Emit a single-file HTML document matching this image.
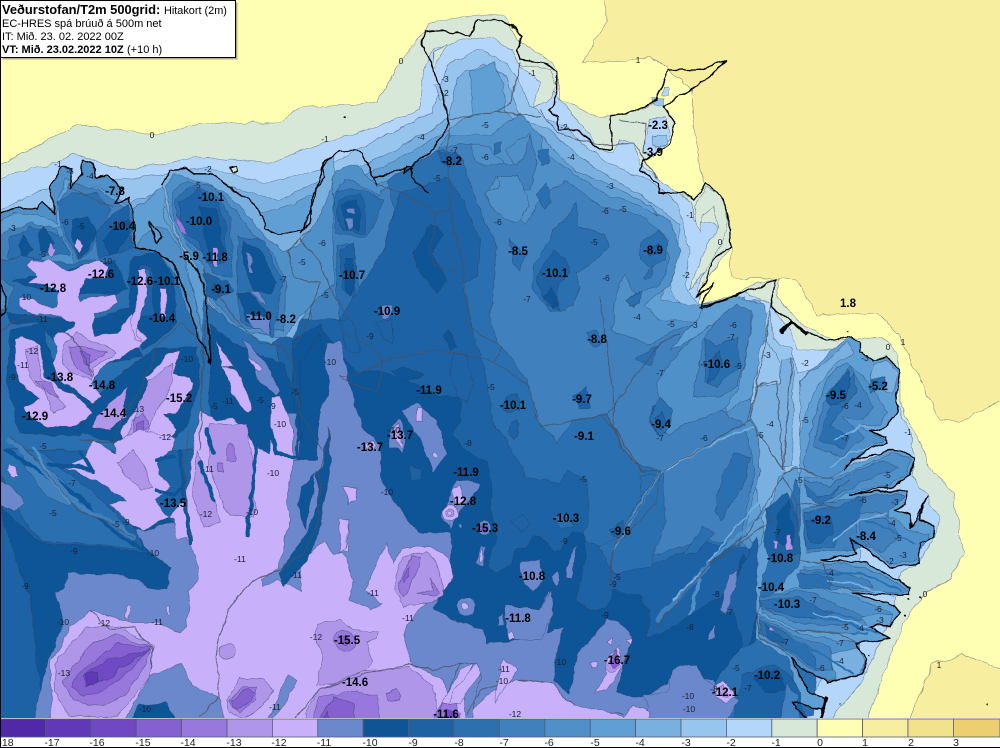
<!DOCTYPE html>
<html><head><meta charset="utf-8"><style>
html,body{margin:0;padding:0;background:#fff}
body{width:1000px;height:748px;overflow:hidden;position:relative;font-family:"Liberation Sans",sans-serif}
svg{position:absolute;left:0;top:0}
polygon,circle{stroke:#2a3a5a;stroke-opacity:.55;stroke-width:.6;vector-effect:non-scaling-stroke}
.c0{fill:#f8eea0}.c1{fill:#d8e8d8}.c2{fill:#b4d6fb}.c3{fill:#98c5ee}.c4{fill:#79b0e0}.c5{fill:#609fd4}.c6{fill:#5090c8}.c7{fill:#3f80bd}.c8{fill:#2c70b0}.c9{fill:#1f62a4}.c10{fill:#0f5596}.c11{fill:#6c88cc}.c12{fill:#c8b0fa}.c13{fill:#b096e8}.c14{fill:#9878dc}.c15{fill:#8460d0}.c16{fill:#7048c4}.c17{fill:#6038b8}.c18{fill:#5028a8}
.l{fill:none;vector-effect:non-scaling-stroke;stroke-linejoin:round;stroke-linecap:round}
.coast{stroke:#000;stroke-width:1.3}
.road{stroke:#4a5060;stroke-width:1;stroke-opacity:.85}
.f10{stroke:#0f5596;stroke-width:4}.f9{stroke:#1f62a4;stroke-width:7}.f8{stroke:#2c70b0;stroke-width:9}.f7{stroke:#3f80bd;stroke-width:5}.f6{stroke:#5090c8;stroke-width:3}.f4{stroke:#79b0e0;stroke-width:1.5}
text{font-family:"Liberation Sans",sans-serif}
.b text{font-size:11.5px;font-weight:bold;fill:#000;text-anchor:middle}
.s text{font-size:8.5px;fill:#1a2030;text-anchor:middle}
</style></head><body>
<svg width="1000" height="748" viewBox="0 0 1000 748">
<defs><filter id="w" filterUnits="userSpaceOnUse" x="-20" y="-20" width="1040" height="780"><feTurbulence type="fractalNoise" baseFrequency=".07" numOctaves="3" seed="4" result="n"/><feDisplacementMap in="SourceGraphic" in2="n" scale="6" xChannelSelector="R" yChannelSelector="G"/></filter></defs>
<rect width="1000" height="748" fill="#fff"/>
<rect x="0" y="0" width="1000" height="720" fill="#ffffb4"/>
<g filter="url(#w)">
<rect x="-20" y="-20" width="1040" height="745" fill="#ffffb4"/>
<polygon class="c0" points="600,-20 608,20 582,63 638,60 650,55 692,90 693,120 700,170 731,247 731,277 740,278 797,280 817,315 877,313 900,337 920,380 940,420 960,422 1020,390 1020,-20"/>
<polygon class="c0" points="907,725 933,663 963,655 1020,675 1020,725"/>
<polygon class="c1" points="-20,175 43,143 77,125 157,135 200,123 280,123 300,107 377,103 400,63 430,23 477,15 505,15 518,40 540,53 557,70 560,100 600,117 635,112 660,100 675,123 670,143 645,160 660,183 693,200 707,183 720,197 730,220 730,247 717,267 703,283 697,310 740,293 757,283 780,280 777,297 800,323 833,340 863,338 883,337 897,353 900,373 900,407 917,437 933,473 953,493 963,553 950,580 925,593 910,613 893,647 865,725 -20,725"/>
<polygon class="c2" points="-20,188 17,172 57,163 73,153 120,170 200,157 273,163 300,150 377,127 420,110 423,70 433,50 460,40 490,37 513,50 517,63 547,80 557,97 583,127 600,150 613,152 620,140 633,143 640,163 660,180 690,202 695,220 713,223 723,233 717,247 707,267 698,287 700,305 743,293 770,303 790,330 797,350 833,350 870,360 900,373 893,397 910,433 915,457 912,477 928,497 940,520 933,540 920,563 900,573 893,613 877,647 863,680 840,707 830,725 -20,725"/>
<polygon class="c3" points="-20,220 20,200 60,183 120,180 180,172 207,168 267,183 320,170 367,145 433,112 440,85 448,65 477,50 507,63 517,80 530,105 545,118 565,125 590,150 620,170 650,180 680,205 685,235 690,255 685,285 700,305 745,298 755,322 770,310 773,340 792,350 797,373 813,370 832,355 860,400 860,600 800,725 -20,725"/>
<polygon class="c4" points="-20,245 30,212 130,203 165,190 200,180 280,200 320,180 380,158 440,125 448,118 458,77 483,62 507,77 513,97 520,118 545,128 590,165 640,195 680,225 676,260 670,290 690,315 720,300 760,300 767,340 750,397 747,417 770,400 780,387 785,470 790,725 -20,725"/>
<polygon class="c5" points="135,225 168,205 200,215 280,210 320,190 380,168 445,132 470,115 473,115 470,70 493,62 503,83 505,110 520,125 540,135 575,170 620,190 650,205 672,235 668,270 660,300 690,305 730,303 762,303 762,340 748,400 745,425 770,570 790,725 100,725 100,400"/>
<polygon class="c6" points="447,135 490,135 520,113 540,135 545,155 570,170 605,195 640,205 670,222 680,250 670,285 645,305 660,320 700,320 725,305 755,305 758,340 745,385 757,425 760,470 745,530 770,570 790,725 300,725 300,400 305,260 315,200 335,170 358,165 375,185 410,172 435,155"/>
<polygon class="c7" points="440,147 470,143 490,150 503,163 518,165 530,135 538,160 530,190 525,190 495,178 490,190 515,215 525,225 540,200 565,180 600,205 640,215 665,235 670,260 660,285 635,295 625,275 618,285 612,330 650,345 675,330 705,320 735,320 745,340 735,385 720,410 745,425 755,470 740,540 765,570 770,650 790,725 300,725 300,420 312,300 320,250 330,200 345,180 362,185 378,195 395,180 425,165"/>
<g transform="translate(300,20) scale(.3333)">
<polygon class="c6" points="510,370 565,380 610,430 560,435 525,420"/>
<polygon class="c6" points="620,390 660,360 690,340 670,420 640,430"/>
<polygon class="c8" points="580,370 605,365 605,395 585,400"/>
<polygon class="c6" points="555,520 600,500 590,470 650,465 670,500 690,560 650,610 610,590 570,560"/>
<polygon class="c8" points="715,390 745,385 745,430 725,440"/>
<polygon class="c8" points="710,520 740,490 755,550 735,570"/>
<polygon class="c8" points="1020,670 1075,630 1105,660 1095,720 1050,740 1020,720"/>
<polygon class="c9" points="1045,690 1075,670 1085,700 1050,710"/>
<polygon class="c8" points="980,840 1015,815 1020,840 1000,860"/>
<polygon class="c8" points="1035,770 1060,735 1055,770 1040,780"/>
<polygon class="c8" points="700,740 750,660 760,630 800,590 830,550 835,620 910,640 925,680 880,730 830,760 840,800 820,860 750,880 700,810"/>
<polygon class="c9" points="710,770 760,690 800,720 810,760 780,790 770,830 780,870 740,860 720,810"/>
<polygon class="c10" points="730,830 750,800 775,850 760,870"/>
<polygon class="c8" points="630,660 660,690 680,700 660,750 640,730"/>
</g>
<polygon class="c8" points="387,180 443,148 457,152 470,183 483,217 497,247 490,320 497,343 507,353 527,380 537,420 557,443 573,420 593,417 607,413 617,437 633,463 660,470 650,500 620,540 640,560 700,540 740,545 745,640 770,700 790,725 300,725 300,330 310,330 320,340 335,340 340,320 335,290 337,245 353,245 360,290 372,300 375,290 385,245 395,210"/>
<polygon class="c9" points="400,193 433,183 447,177 463,200 480,240 477,277 463,283 470,320 487,380 493,420 513,453 527,477 560,483 567,470 587,480 590,520 580,540 607,547 613,553 643,567 680,553 703,543 753,550 757,633 770,690 790,725 200,725 200,420 285,330 300,320 340,320 357,290 383,253"/>
<g transform="translate(300,20) scale(.3333)">
<polygon class="c8" points="115,510 190,510 250,540 220,620 190,650 110,640 100,540"/>
<polygon class="c9" points="115,540 180,520 200,560 190,640 130,630 110,590"/>
<polygon class="c10" points="125,550 170,540 185,570 175,630 135,625"/>
<polygon class="c11" points="140,565 165,565 165,582 145,582"/>
<polygon class="c11" points="135,600 155,598 160,625 145,630"/>
<polygon class="c9" points="415,390 470,400 480,425 450,445 420,430"/>
<polygon class="c10" points="390,610 430,640 400,700 440,780 410,820 350,740 340,700 370,650"/>
<polygon class="c9" points="120,690 160,670 170,730 160,830 125,800"/>
<polygon class="c10" points="135,715 160,715 165,790 150,825 135,790"/>
<polygon class="c11" points="240,860 280,860 270,895 250,895"/>
</g>
<polygon class="c9" points="-20,440 200,440 200,725 -20,725"/>
<polygon class="c10" points="293,340 320,325 340,353 357,373 377,370 397,377 413,383 440,397 457,397 463,403 460,420 453,433 463,447 487,463 493,487 490,507 497,537 487,567 497,573 510,563 517,550 527,547 533,537 540,537 553,550 560,550 573,533 583,533 587,553 580,577 577,600 590,610 607,607 613,590 640,597 650,610 647,637 665,632 693,613 730,590 743,555 755,570 757,640 775,680 790,725 45,725 30,600 0,510 20,450 200,450 290,430"/>
<g transform="translate(340,320) scale(.3333)">
<polygon class="c9" points="105,0 160,0 160,70 130,60"/><polygon class="c10" points="310,40 330,30 350,80 330,90"/>
<polygon class="c9" points="340,100 380,110 400,190 380,245 350,230 330,160"/>
<polygon class="c10" points="155,150 190,140 250,165 190,185"/><polygon class="c9" points="0,0 40,0 60,100 20,90"/>
<polygon class="c9" points="510,220 530,215 540,270 500,280 485,260"/>
<polygon class="c9" points="510,310 530,300 540,340 520,360 500,340"/>
<polygon class="c9" points="700,230 740,200 750,260 720,265"/>
<polygon class="c9" points="940,260 975,235 995,280 985,340 950,345 930,310"/>
<polygon class="c10" points="955,280 975,270 985,320 955,325"/>
<polygon class="c9" points="830,610 850,600 860,640 840,650"/>
<polygon class="c8" points="740,40 770,35 790,70 760,80"/>
<polygon class="c9" points="510,600 550,585 570,610 545,640"/>
<polygon class="c8" points="640,590 680,580 700,620 660,625"/>
<polygon class="c8" points="903,470 960,465 950,565 920,570 905,530"/>
</g>
<polygon class="c11" points="147,530 240,500 310,430 327,343 340,340 350,387 362,427 380,447 383,483 407,520 420,533 450,533 453,547 448,563 447,587 433,607 453,620 483,630 487,643 520,640 540,610 548,590 553,610 547,633 563,627 557,653 553,680 570,693 577,653 607,620 617,620 633,637 627,653 617,693 640,697 667,683 673,673 680,680 700,680 713,680 740,700 750,725 33,725 45,670 63,622 55,593 65,587 67,572 97,575 120,575 140,580 147,587 168,590 170,567 150,553 143,543 133,530"/>
<!-- below W block early -->
<g transform="translate(0,430) scale(.3333)">
<polygon class="c9" points="-30,0 600,0 570,150 590,300 470,260 400,290 440,370 320,350 130,340 90,310 0,230 -30,220"/>
<polygon class="c8" points="-30,30 30,0 170,100 340,240 420,360 320,345 130,335 90,300 0,130"/>
<polygon class="c7" points="60,50 150,120 250,210 200,230 130,190 80,120"/>
</g>
<!-- West block base -->
<g transform="translate(0,150) scale(.3333)">
<polygon class="c5" points="400,180 500,100 490,200 550,300 630,640 405,290"/>
<polygon class="c6" points="405,290 430,260 470,230 500,240 540,290 580,430 620,620 560,520 500,340"/>
<polygon class="c5" points="450,215 470,240 485,265 470,280 460,260"/>
<polygon class="c6" points="-30,200 60,170 110,180 125,155 165,195 150,110 185,50 215,60 210,115 245,75 250,30 280,40 290,85 320,75 365,115 345,165 385,145 400,180 405,290 480,310 520,340 545,400 570,480 600,570 625,640 620,900 -30,900"/>
<polygon class="c5" points="-30,230 40,190 110,195 170,220 170,160 195,80 215,95 240,120 290,110 340,130 395,180 380,200 300,190 200,220 100,260 -30,300"/>
<polygon class="c7" points="-30,290 30,240 100,220 170,240 200,300 140,300 50,330 -30,320"/>
<polygon class="c7" points="180,150 205,100 300,120 370,170 395,180 400,280 280,340 230,350 180,220"/>
<polygon class="c8" points="205,130 290,130 330,180 310,230 270,300 240,330 215,290 190,230 170,160"/>
<polygon class="c10" points="215,210 260,200 290,240 260,300 240,325 220,290"/>
<polygon class="c12" points="220,285 235,265 248,285 235,305"/>
<polygon class="c9" points="285,250 340,190 385,160 400,290 350,350 300,340"/>
<polygon class="c10" points="310,270 350,220 385,210 390,260 330,320"/>
<polygon class="c8" points="30,270 90,230 190,260 210,320 150,310 110,330 60,330 20,320"/>
<polygon class="c10" points="115,250 130,230 160,280 140,310 120,300"/>
<polygon class="c10" points="50,290 70,250 95,300 70,330"/>
<polygon class="c13" points="150,280 165,300 158,320 145,305"/>
<polygon class="c8" points="-30,330 80,320 200,340 290,330 400,290 480,310 530,380 560,480 600,570 620,640 625,900 -30,900"/>
<polygon class="c7" points="-30,360 40,410 20,480 -30,490"/>
<polygon class="c6" points="-30,400 20,440 10,480 -30,480"/>
<polygon class="c10" points="40,395 100,380 240,350 350,330 380,420 350,430 200,430 120,420"/>
<polygon class="c10" points="20,490 150,500 250,520 390,470 390,550 430,620 330,640 220,640 120,520 30,520"/>
<polygon class="c10" points="30,540 130,520 150,620 240,720 300,780 240,860 60,850 20,700"/>
<polygon class="c10" points="270,770 350,680 460,600 590,590 600,700 560,830 480,890 350,880 240,850"/>
<polygon class="c10" points="400,320 480,310 520,380 530,520 490,560 430,600 390,480 385,380"/>
<polygon class="c9" points="420,340 455,350 460,500 420,500"/>
<polygon class="c8" points="430,350 450,360 445,410 435,410"/>
<polygon class="c12" points="85,345 95,325 125,335 150,325 165,340 205,365 250,350 290,330 325,345 315,385 260,385 240,420 240,450 345,430 355,455 330,480 280,495 280,555 350,550 395,490 405,510 400,530 440,560 420,590 390,600 360,625 325,640 290,670 270,700 305,740 275,760 230,720 180,690 155,640 170,610 160,560 225,530 225,520 150,490 100,495 60,470 55,440 90,445 140,470 170,470 175,425 120,400 85,400 110,380"/>
<polygon class="c13" points="190,590 230,550 270,570 320,590 350,610 320,630 280,650 270,690 230,680 190,650"/>
<polygon class="c14" points="210,590 270,590 320,610 270,640 270,680 240,660 215,630"/>
<polygon class="c15" points="235,600 275,610 270,650 255,640"/>
<polygon class="c12" points="45,570 70,560 120,590 135,680 190,720 225,730 275,790 230,830 150,830 90,810 75,770 120,750 60,700 45,640"/>
<polygon class="c13" points="75,600 110,590 125,680 170,740 200,770 160,790 130,720 90,680"/>
<polygon class="c14" points="110,690 150,700 180,745 140,730"/>
<polygon class="c13" points="275,830 300,790 350,740 385,710 370,770 380,800 330,840"/>
<polygon class="c12" points="440,680 480,640 500,610 540,600 520,670 570,680 575,710 550,760 530,790 490,790 530,840 490,880 380,880 360,850 420,750 470,730"/>
<polygon class="c13" points="450,690 490,660 520,640 510,720 470,780 430,880 380,870 400,800"/>
<polygon class="c14" points="400,800 430,790 450,830 400,860"/>
<polygon class="c15" points="410,820 430,810 430,860 410,860"/>
<polygon class="c12" points="415,360 435,355 440,440 420,500 405,560 430,580 400,570 395,500 415,450"/>
<polygon class="c12" points="480,420 500,415 500,500 485,500"/>
<polygon class="c14" points="530,170 560,220 565,250 540,240 525,210"/>
</g>
<!-- Second peninsula -->
<g transform="translate(0,150) scale(.3333)">
<polygon class="c4" points="490,100 510,60 560,55 580,70 630,70 700,120 750,150 790,200 790,240 840,255 910,240 935,170 970,50 1000,15 1000,200 960,400 880,560 700,540 620,450 600,370 560,320 520,240 500,170"/>
<polygon class="c6" points="500,110 520,70 600,90 680,130 740,190 790,260 850,300 900,280 960,200 1000,100 1000,400 900,500 850,560 700,540 620,440 590,350 540,270 510,190"/>
<polygon class="c7" points="515,130 560,90 640,110 700,180 760,250 830,320 860,400 850,540 710,530 640,450 610,350 560,280 520,200"/>
<polygon class="c8" points="525,150 570,110 640,130 690,200 700,380 640,370 610,310 560,270 530,200"/>
<polygon class="c9" points="540,160 590,120 650,160 680,230 670,340 620,340 600,280 545,240"/>
<polygon class="c10" points="600,170 650,180 670,300 640,350 620,280"/>
<polygon class="c13" points="635,290 650,290 650,350 640,350"/>
<polygon class="c14" points="530,190 545,220 565,255 540,245 525,215"/>
<polygon class="c8" points="715,260 790,270 850,390 820,560 720,510 710,400"/>
<polygon class="c10" points="730,270 780,300 830,400 810,430 760,420 730,340"/>
<polygon class="c11" points="742,300 760,320 750,350 762,370 745,365"/>
<polygon class="c11" points="750,425 780,425 805,470 780,450"/>
<polygon class="c10" points="715,430 750,430 810,490 810,550 740,510"/>
<polygon class="c11" points="740,490 810,505 805,555 760,530"/>
<polygon class="c9" points="610,370 680,390 700,420 650,450 620,440"/>
<polygon class="c10" points="640,400 670,410 665,430 640,430"/>
<polygon class="c8" points="610,450 700,530 830,590 880,930 600,930"/>
<polygon class="c10" points="630,520 700,580 850,640 880,740 900,930 630,930"/>
<polygon class="c12" points="650,570 680,620 700,650 670,650"/>
<polygon class="c12" points="670,650 710,660 760,770 745,790 700,740"/>
<polygon class="c11" points="725,565 800,640 840,720 830,740 770,680"/>
<polygon class="c12" points="745,625 785,650 785,665 760,655"/>
<polygon class="c11" points="860,790 890,790 890,930 865,930"/>
<polygon class="c10" points="900,640 960,550 990,720 960,780 950,930 900,930"/>
</g>
<!-- South / lilac -->
<g transform="translate(0,430) scale(.3333)">
<polygon class="c12" points="590,-10 600,-60 650,-30 700,-40 760,30 775,60 810,70 815,-100 840,-100 880,-10 880,100 860,200 870,270 850,350 835,415 780,450 790,470 830,450 880,470 905,480 900,400 950,350 975,330 1000,370 1030,370 1060,450 1050,510 1110,540 1150,520 1100,480 1130,400 1160,340 1180,400 1210,350 1290,350 1340,380 1360,440 1340,480 1280,520 1220,580 1210,620 1235,700 1330,750 1340,790 1380,700 1430,700 1440,740 1415,885 155,885 150,700 210,590 270,545 320,550 360,570 400,575 470,575 540,610 560,590 570,480 595,450 590,380 555,320 530,330 520,270 505,265 560,200"/>
<polygon class="c11" points="450,740 545,700 580,770 660,800 670,885 360,885 400,830"/>
<polygon class="c10" points="380,885 420,825 500,815 535,885"/>
<polygon class="c11" points="860,730 890,750 860,820 800,885 830,810"/>
<polygon class="c11" points="1300,885 1340,790 1380,700 1430,700 1440,740 1415,885"/>
<polygon class="c12" points="1300,885 1330,810 1380,720 1420,700 1390,780 1400,885"/>
<polygon class="c13" points="175,680 260,590 360,590 460,650 450,740 400,810 350,860 210,860 160,780"/>
<polygon class="c14" points="205,730 280,640 350,615 455,655 440,700 380,790 310,830 220,810 190,760"/>
<polygon class="c15" points="230,730 300,680 350,640 450,655 370,740 310,780 250,800 215,770"/>
<polygon class="c16" points="250,735 320,690 450,660 370,710 320,750 260,770"/>
<polygon class="c17" points="258,730 292,725 292,760 258,770"/>
<polygon class="c13" points="1185,440 1210,380 1280,365 1310,400 1330,470 1330,500 1280,520 1210,525 1185,480"/>
<polygon class="c14" points="1195,460 1235,378 1262,380 1250,430 1220,490 1205,500"/>
<polygon class="c14" points="1285,440 1320,490 1310,498 1250,490 1300,480"/>
<polygon class="c15" points="1205,450 1225,415 1225,440 1210,460"/>
<polygon class="c13" points="950,580 1020,570 1080,605 1135,605 1130,625 1100,640 1115,690 1090,730 1000,760 950,770 970,680 950,640"/>
<circle class="c14" cx="1035" cy="632" r="33"/><circle class="c15" cx="1035" cy="632" r="14"/>
<polygon class="c13" points="920,840 960,780 1090,720 1230,715 1300,770 1320,885 910,885"/>
<polygon class="c14" points="930,885 960,800 1060,785 1130,800 1140,885"/>
<polygon class="c15" points="940,885 1000,800 1060,820 1065,885"/>
<polygon class="c16" points="950,885 980,845 1000,885"/>
<polygon class="c14" points="1160,790 1190,775 1200,810 1165,810"/>
<polygon class="c13" points="680,810 720,745 790,745 820,780 790,830 730,865 690,850"/>
<polygon class="c14" points="685,815 730,770 770,770 765,810 720,850"/>
<polygon class="c15" points="695,815 740,775 765,790 745,820 710,840"/>
<circle class="c13" cx="682" cy="664" r="22"/>
<polygon class="c14" points="1290,885 1330,815 1385,850 1375,885"/><polygon class="c16" points="1310,885 1335,835 1365,860 1360,885"/>
<polygon class="c12" points="1030,170 1070,170 1070,210 1045,225"/>
<polygon class="c12" points="1030,290 1045,265 1045,370 1025,360"/>
<polygon class="c12" points="280,30 345,70 340,40 420,0 520,20 520,60 470,100 480,130 510,170 465,210 505,265 430,300 385,280 330,220 380,215 290,150 185,110 250,90"/>
<polygon class="c13" points="350,100 400,60 440,120 455,175 425,180 370,130"/>
<polygon class="c13" points="590,60 605,100 650,230 665,280 610,290 580,200"/>
<polygon class="c13" points="625,-20 740,-20 760,120 765,260 690,260 630,120"/>
<polygon class="c14" points="680,60 690,40 710,70 710,95 680,90"/>
<polygon class="c14" points="655,100 670,100 670,125 655,125"/>
<polygon class="c12" points="500,530 510,530 508,555 500,555"/><polygon class="c12" points="380,530 392,530 385,565 375,560"/>
<polygon class="c11" points="-20,150 35,170 75,220 45,245 -20,220"/>
<polygon class="c12" points="30,100 45,110 55,140 40,145 25,120"/>
<polyline class="l f10" points="470,180 520,190 550,170 570,330"/>
<polyline class="l f10" points="540,60 555,200 570,340"/>
<polyline class="l f10" points="600,100 640,210"/>
<polyline class="l f10" points="770,0 760,150 740,320"/>
<polyline class="l f10" points="810,0 830,70 885,80"/>
<polyline class="l f10" points="620,0 640,70"/>
<polygon class="c10" points="905,170 970,110 985,-10 992,100 960,300 920,390 850,470 840,430 900,340 955,230 950,120 915,300 895,230"/>
<polyline class="l f10" points="20,60 130,130 240,200 320,290 430,360"/>
<polyline class="l f7" points="30,30 150,140 240,230 340,280 400,320"/>
<polyline class="l f6" points="100,50 150,140 210,220"/>
<polyline class="l f10" points="150,100 280,120 240,70"/>
<polyline class="l f10" points="470,90 520,80"/>
</g>
<!-- East region -->
<g transform="translate(600,280) scale(.3333)">
<polygon class="c5" points="320,80 400,50 490,70 500,150 480,250 450,350 380,400 360,330 400,200 330,170 270,180 210,210"/>
<polygon class="c6" points="240,210 330,140 410,90 460,110 440,220 410,340 370,390 250,430 210,470 190,460 170,310"/>
<polygon class="c7" points="310,180 360,110 410,70 460,90 440,220 410,320 350,350 280,350 300,250"/>
<polygon class="c8" points="320,170 350,200 410,170 420,260 350,320 310,310"/>
<polygon class="c9" points="330,250 355,210 370,250 345,300 320,310"/>
<polygon class="c8" points="150,420 180,350 215,390 215,430 180,470"/>
<polygon class="c9" points="165,420 185,390 200,420 180,450"/>
<polygon class="c8" points="80,60 120,35 120,65 90,80"/>
<polygon class="c8" points="100,240 180,190 150,255"/>
<polygon class="c8" points="345,690 370,580 400,520 450,530 430,620 360,720"/>
<polygon class="c8" points="250,820 310,740 340,760 290,820"/>
<polygon class="c8" points="0,800 60,770 100,690 160,600 190,580 200,720 150,860 40,880"/>
<polygon class="c9" points="30,750 60,740 85,750 65,770 40,770"/>
<polyline class="l f6" points="40,810 180,575 300,510 460,430"/>
<polyline class="l f4" points="200,570 290,510 460,440"/>
<polyline class="l f6" points="320,850 500,690"/>
<polyline class="l f4" points="320,850 530,600"/>
<polyline class="l f7" points="320,860 240,950 170,1020"/>
<polyline class="l f4" points="300,880 220,960"/>
<polyline class="l f6" points="300,900 270,1000"/>
<polygon class="c9" points="420,870 470,770 480,830 470,1000 440,1130 400,1000 360,1000"/>
<polygon class="c11" points="360,990 385,890 410,870 405,920 380,1000"/>
<polygon class="c11" points="325,1060 345,1035 345,1075 325,1078"/>
<polygon class="c4" points="465,320 540,310 545,240 580,240 575,560 540,560 450,410"/>
<polygon class="c3" points="500,180 540,250 540,310 470,320 480,200"/>
<polygon class="c5" points="590,560 540,590 470,830 470,1310 620,1310 620,640"/>
<polygon class="c8" points="485,890 590,600 680,900 640,1310 470,1310"/>
<polygon class="c9" points="500,690 560,640 590,700 600,820 520,850 490,800"/>
<polygon class="c10" points="530,700 565,660 585,760 570,810 530,780"/>
<polygon class="c13" points="556,765 568,765 578,808 562,808"/>
<polygon class="c13" points="520,780 532,785 532,805 525,805"/>
<polygon class="c5" points="700,210 745,170 780,185 780,215 820,240 860,230 900,270 890,340 890,400 860,440 810,455 860,470 860,490 800,510 740,560 880,510 945,535 930,590 880,620 750,645 920,630 920,670 885,690 930,700 935,745 980,650 955,720 1000,740 1000,770 960,790 960,850 870,860 750,775 770,820 660,840 800,850 930,920 930,945 760,940 880,975 900,1000 870,1040 810,1040 870,1075 770,1090 800,1140 790,1180 680,1210 600,1160 570,1130 580,1150 620,1230 680,1260 670,1290 580,1265 620,1320 460,1320 470,1000 600,850 600,560 600,400 600,300"/>
<polygon class="c4" points="600,300 640,270 700,230 740,185 760,215 680,280 640,340 610,430 600,470"/>
<polygon class="c4" points="820,250 860,240 895,280 880,340 840,330 810,300"/>
<polygon class="c6" points="610,550 650,390 680,290 740,250 800,300 860,400 840,430 780,440 860,480 800,505 730,570 690,600 610,570"/>
<polygon class="c7" points="640,500 660,400 700,320 750,260 790,330 820,380 790,420 730,410 790,470 730,530 680,520"/>
<polygon class="c8" points="660,480 680,400 720,350 760,280 770,340 730,380 690,440 750,470 730,510"/>
<polygon class="c9" points="675,345 720,300 745,270 755,310 735,360 690,380"/>
<polygon class="c8" points="810,300 850,290 860,320 810,340"/>
<polygon class="c6" points="610,590 700,600 800,550 880,520 935,540 920,590 850,620 740,640 670,680 620,650"/>
<polygon class="c7" points="610,600 690,620 770,570 850,540 900,560 800,600 720,640 660,670 620,640"/>
<polygon class="c8" points="610,610 650,650 690,640 750,600 720,620 670,675 620,650"/>
<polygon class="c7" points="605,690 720,660 890,640 915,650 870,690 850,800 710,810 620,820"/>
<polygon class="c6" points="770,700 850,700 930,750 990,760 950,840 870,850 770,770"/>
<polygon class="c7" points="780,720 860,710 900,770 840,820 780,770"/>
<polygon class="c8" points="610,700 700,680 790,650 780,710 720,760 700,800 620,810"/>
<polygon class="c9" points="615,720 690,710 700,760 660,790 630,790"/>
<polygon class="c6" points="610,860 720,850 840,880 925,930 900,940 760,930 640,920"/>
<polygon class="c7" points="600,870 700,870 800,900 820,920 700,930 600,920"/>
<polygon class="c8" points="590,880 700,890 690,930 600,920"/>
<polygon class="c6" points="480,950 620,920 760,950 880,1000 870,1030 810,1040 760,1060 600,1050 490,1000"/>
<polygon class="c7" points="480,950 620,930 720,980 800,1010 740,1040 600,1030 490,990"/>
<polygon class="c8" points="480,960 600,950 700,1000 640,1020 500,990"/>
<polygon class="c5" points="780,1010 880,1000 870,1040 800,1040"/>
<polygon class="c6" points="470,1000 600,1060 780,1090 790,1170 680,1205 600,1160 540,1100 480,1080"/>
<polygon class="c7" points="480,1010 590,1070 690,1100 700,1170 640,1170 560,1110 480,1060"/>
<polygon class="c8" points="480,1020 560,1060 640,1120 650,1170 570,1110 480,1060"/>
<polygon class="c9" points="490,1030 540,1070 560,1090 510,1080"/>
<polygon class="c13" points="510,1040 525,1050 525,1055 508,1050"/>
<polygon class="c4" points="690,1120 780,1100 795,1150 780,1180 710,1200"/>
<polygon class="c8" points="420,1110 470,1080 560,1130 620,1320 300,1320 350,1200"/>
<polygon class="c9" points="430,1180 530,1150 590,1210 620,1320 400,1320"/>
<polygon class="c10" points="460,1190 530,1170 560,1230 500,1240"/>
<polygon class="c7" points="560,1210 590,1240 600,1320 540,1320"/>
<polygon class="c11" points="200,1240 220,1170 290,1150 310,1200 420,1260 380,1320 150,1320 130,1240"/>
<polygon class="c12" points="345,1215 370,1200 410,1250 380,1270 345,1250"/>
<polygon class="c13" points="358,1225 372,1215 385,1250 365,1250"/>
<polyline class="l f4" points="700,480 780,440 850,445"/>
<polyline class="l f4" points="690,560 750,520 820,500"/>
<polyline class="l f4" points="700,780 780,720 860,700"/>
<polyline class="l f4" points="680,900 760,910 880,950"/>
<polyline class="l f4" points="640,1000 720,1020 800,1040"/>
<polyline class="l f8" points="700,1000 770,1020" style="stroke-width:2"/>
<polyline class="l f8" points="760,1060 800,1060" style="stroke-width:2"/>
<polyline class="l f8" points="580,1080 660,1120 760,1180" style="stroke-width:2"/>
<polyline class="l f8" points="610,1000 730,1030 840,1060" style="stroke-width:2"/>
<polyline class="l f8" points="640,880 780,880 900,930" style="stroke-width:2"/>
<polyline class="l f8" points="800,720 870,750 940,790" style="stroke-width:2"/>
</g>
<g transform="translate(300,20) scale(.3333)">
<polygon class="c2" points="1050,295 1095,290 1110,355 1060,410 1030,395 1045,330"/>
<polygon class="c3" points="1060,350 1095,345 1100,370 1065,385"/>
<polygon class="c2" points="1090,200 1105,200 1105,225 1090,225"/>
<polygon class="c3" points="1055,235 1095,235 1095,255 1060,255"/>
<polygon class="c1" points="1180,560 1220,500 1260,530 1285,600 1270,660 1220,750 1170,810 1200,720 1255,620 1240,560 1210,580 1200,640"/>
<polygon class="c1" points="655,135 700,140 750,150 770,200 740,250 700,260 720,190 690,160"/>
<polygon class="c3" points="400,190 415,190 435,240 420,240"/>
<polygon class="c1" points="400,100 440,70 400,150"/>
</g>
<!-- Roads -->
<g transform="translate(0,150) scale(.3333)">
<polyline class="l road" points="200,110 270,140 340,175"/>
<polyline class="l road" points="0,550 40,510 110,500 160,520 220,570 260,630 290,700"/>
<polyline class="l road" points="590,560 545,520 470,590 430,700 370,800 340,880 240,870"/>
<polyline class="l road" points="610,360 700,500 780,580 850,590 880,660 900,790 970,900"/>
<polyline class="l road" points="880,590 910,550 960,400 880,380 860,300 930,240"/>
<polyline class="l road" points="620,450 610,620 600,900"/>
</g>
<g transform="translate(300,20) scale(.3333)">
<polyline class="l road" points="220,490 300,520 410,575 450,570 490,750 510,900"/>
<polyline class="l road" points="450,570 445,300 590,275 720,290"/>
<polyline class="l road" points="590,275 630,250 660,130"/>
<polyline class="l road" points="410,575 390,690 410,740 470,760"/>
<polyline class="l road" points="0,660 60,720 100,830 150,900"/>
<polyline class="l road" points="720,270 770,340 900,375 1000,370 1070,470"/>
<polyline class="l road" points="1030,400 1040,310 960,300"/>
</g>
<g transform="translate(340,320) scale(.3333)">
<polyline class="l road" points="0,170 60,160 130,120 300,90 460,125 570,200 600,320 800,285 850,370 910,460 960,450"/>
<polyline class="l road" points="800,285 960,70 1020,40"/>
<polyline class="l road" points="0,30 100,90 130,120"/>
<polyline class="l road" points="370,0 420,40 490,85 460,125"/>
<polyline class="l road" points="130,120 110,220 40,190 0,170"/>
<polyline class="l road" points="960,450 900,560 820,680 810,800"/>
</g>
<g transform="translate(600,280) scale(.3333)">
<polyline class="l road" points="0,410 40,440 70,510 130,575 190,570 450,420 550,570 530,300 470,320 440,420"/>
<polyline class="l road" points="450,420 500,180 510,70"/>
<polyline class="l road" points="550,570 575,240"/>
<polyline class="l road" points="550,580 600,565 700,605"/>
<polyline class="l road" points="550,590 590,670 600,840 670,850 690,910 780,940"/>
<polyline class="l road" points="550,590 450,750 320,860 170,1040"/>
<polyline class="l road" points="180,570 170,670 40,800 30,900"/>
<polyline class="l road" points="500,690 510,720 380,820 320,850"/>
<polyline class="l road" points="590,670 700,680"/>
<polyline class="l road" points="470,1000 480,1080 560,1110"/>
<polyline class="l road" points="580,1050 720,1060 770,1090"/>
<polyline class="l road" points="0,50 40,350 40,440"/>
</g>
<g transform="translate(0,430) scale(.3333)">
<polyline class="l road" points="30,20 100,80 150,140 230,240 330,280 400,320"/>
<polyline class="l road" points="570,0 550,120 570,330"/>
<polyline class="l road" points="840,420 760,450 690,530 665,590 650,680 660,800 600,860"/>
<polyline class="l road" points="840,420 910,370 960,270 960,120 990,30 985,0"/>
<polyline class="l road" points="880,870 960,780 1090,730 1240,705 1300,720 1380,700"/>
<polyline class="l road" points="270,545 330,600 400,590 440,640 460,660 450,720"/>
</g>
<g transform="translate(340,320) scale(.3333)">
<polyline class="l road" points="380,1180 430,1110 540,1075 640,1090 710,1170 850,1180"/>
</g>
<!-- Coast -->
<g transform="translate(0,150) scale(.3333)">
<polyline class="l coast" points="0,190 60,170 110,180 125,155 165,195 150,110 185,50 215,60 210,115 245,75 250,30 280,40 290,85 320,75 365,115 345,165 385,145 400,180 405,290 480,310 520,340 545,400 570,480 590,560 615,595 630,640"/>
<polyline class="l coast" points="0,400 18,440 15,490 0,500"/>
<polyline class="l coast" points="555,320 600,370 620,470 630,630"/>
<polyline class="l coast" points="490,100 510,60 560,55 580,70 630,70 700,120 750,150 790,200 790,240 840,255 910,240 935,170 970,50 1000,15"/>
<polygon points="450,215 470,240 485,265 470,280 460,260" style="fill:none;stroke:#000;stroke-width:1.3;stroke-opacity:1"/>
<polygon points="690,55 712,50 715,65 695,68" style="fill:#d8e8d8;stroke:#000;stroke-width:1.3;stroke-opacity:1"/>
<circle cx="628" cy="630" r="8" style="fill:#000;stroke:none"/>
</g>
<g transform="translate(300,20) scale(.3333)">
<polyline class="l coast" points="0,640 30,610 35,530 75,470 70,430 120,390 180,395 215,460 230,500"/>
<polyline class="l coast" points="225,475 330,440 400,390 445,310 440,270 400,140 365,70 375,35 430,30 470,35 510,50 530,0 580,0 600,5 640,20 665,50 650,90 660,120 730,130 770,155 770,220 750,270 775,290 775,330 830,330 900,390 935,385 930,290 1000,275 1070,240 1100,150 1190,150 1280,120 1250,150 1180,205 1090,260 1125,310 1110,370 1030,420 1020,450 1075,490 1080,520 1150,520 1180,540 1220,490 1260,530 1290,600 1290,680 1240,720 1215,790 1190,830 1240,790 1210,835 1205,870 1320,820"/>
<polyline class="l coast" points="330,440 350,490 385,515"/>
<polyline class="l coast" points="335,445 310,460 320,440" />
<circle cx="132" cy="293" r="3" style="fill:#000;stroke:none"/>
</g>
<g transform="translate(600,280) scale(.3333)">
<polyline class="l coast" points="300,85 430,40 530,0 510,75 610,150 680,180 745,170 780,185 780,215 820,240 860,230 900,270 890,340 890,400 860,440 810,455 860,470 860,490 800,510 740,560"/>
<polyline class="l coast" points="735,570 760,540 880,510 945,535 930,590 880,620 750,645 920,630 920,670 885,690 930,700 935,745 980,650 955,720 1000,740 1000,770 960,790 960,850 870,860 750,775 770,820 660,840 800,850 930,920 930,945 760,940 880,975 900,1000 870,1040 810,1040 870,1075 770,1090 800,1140 790,1180 680,1210 600,1160 570,1130 580,1150 620,1230 680,1260 670,1290 580,1265 620,1320"/>
<polyline class="l coast" points="570,125 545,155" style="stroke-width:4"/>
<polyline class="l coast" points="575,125 620,160" style="stroke-width:2.5"/>
<polyline class="l coast" points="680,1255 660,1320" style="stroke-width:3"/>
<circle cx="915" cy="1007" r="3" style="fill:#000;stroke:none"/><circle cx="960" cy="952" r="3" style="fill:#000;stroke:none"/><circle cx="1162" cy="1275" r="3" style="fill:#000;stroke:none"/><circle cx="925" cy="960" r="3" style="fill:#000;stroke:none"/><circle cx="745" cy="155" r="2" style="fill:#000;stroke:none"/><circle cx="808" cy="1128" r="2" style="fill:#000;stroke:none"/><circle cx="720" cy="1272" r="2" style="fill:#000;stroke:none"/>
</g>
<!-- lakes & blobs -->
<g transform="translate(340,320) scale(.3333)">
<polygon class="c11" points="180,270 230,250 290,300 320,400 280,460 250,380 230,340"/>
<polygon class="c12" points="230,265 245,265 245,305 230,305"/><circle class="c12" cx="288" cy="403" r="8"/>
<polygon class="c11" points="145,380 155,320 180,300 200,360 190,400 175,385"/>
<polygon class="c12" points="158,330 175,310 190,360 190,385 170,365"/><polygon class="c13" points="165,330 178,320 190,370 175,350"/>
<circle class="c12" cx="92" cy="380" r="15"/><circle class="c13" cx="92" cy="380" r="8"/>
<polygon class="c11" points="300,590 335,530 345,480 395,480 420,490 395,530 360,570 330,630"/>
<polygon class="c12" points="340,510 360,495 370,540 345,560"/><circle class="c12" cx="330" cy="580" r="24"/><circle class="c13" cx="330" cy="580" r="13"/><circle class="c12" cx="330" cy="580" r="7"/>
<circle class="c11" cx="432" cy="625" r="20"/><circle class="c14" cx="432" cy="625" r="11"/><circle class="c16" cx="432" cy="625" r="6"/>
<circle class="c11" cx="378" cy="860" r="29"/><circle class="c12" cx="375" cy="858" r="10"/>
<polygon class="c11" points="540,730 600,715 610,780 580,815 550,790"/>
<polygon class="c11" points="635,770 655,750 665,780 650,800"/>
<polygon class="c11" points="675,750 710,670 705,720 695,775 680,770"/>
<polygon class="c11" points="405,730 425,675 440,680 425,740"/><polygon class="c12" points="420,700 432,680 428,720 415,730"/>
<polygon class="c11" points="475,890 490,880 490,915 475,915"/>
<polygon class="c11" points="495,860 530,860 600,870 630,810 640,880 600,960 520,960 500,950"/>
<polygon class="c12" points="500,940 515,930 520,955 505,960"/>
<polygon class="c9" points="210,435 240,450 245,480 215,480"/>
<circle class="c11" cx="362" cy="618" r="5"/>
<polygon class="c12" points="765,1120 800,1060 795,1020 840,980 850,1040 820,1080 800,1110"/>
<polygon class="c13" points="795,1040 830,990 845,1040 815,1060"/><polygon class="c15" points="810,1020 830,990 845,1025 825,1045"/><polygon class="c12" points="750,1030 768,1025 765,1045 755,1045"/><polygon class="c12" points="800,965 815,955 815,975"/><polygon class="c12" points="860,960 880,955 870,975"/>
<polygon class="c12" points="10,500 50,500 50,540 25,555"/>
<polygon class="c12" points="0,600 25,600 20,680 0,700"/>
<polygon class="c12" points="400,1170 450,1120 530,1075 640,1090 700,1160 790,1170 850,1190 850,1215 400,1215"/>
<polygon class="c12" points="330,1150 340,1110 410,1030 420,1060 360,1150"/>
<polygon class="c12" points="460,1150 490,1020 535,1050 510,1080"/>
<polygon class="c12" points="850,1190 880,1160 930,1175 930,1215 850,1215"/>
<polygon class="c14" points="280,1215 310,1150 345,1150 365,1215"/><polygon class="c16" points="300,1215 320,1170 345,1175 350,1215"/>
</g>
</g>
<!-- legend -->
<rect x="0" y="718" width="1000" height="30" fill="#fff"/>
<g stroke="#555a70" stroke-width=".8">
<rect x="0" y="719" width="45.4" height="18" fill="#5028a8"/><rect x="45.4" y="719" width="45.4" height="18" fill="#6038b8"/><rect x="90.8" y="719" width="45.4" height="18" fill="#7048c4"/><rect x="136.2" y="719" width="45.4" height="18" fill="#8460d0"/><rect x="181.6" y="719" width="45.4" height="18" fill="#9878dc"/><rect x="227" y="719" width="45.4" height="18" fill="#b096e8"/><rect x="272.4" y="719" width="45.4" height="18" fill="#c8b0fa"/><rect x="317.8" y="719" width="45.4" height="18" fill="#6c88cc"/><rect x="363.2" y="719" width="45.4" height="18" fill="#0f5596"/><rect x="408.6" y="719" width="45.4" height="18" fill="#1f62a4"/><rect x="454" y="719" width="45.4" height="18" fill="#2c70b0"/><rect x="499.4" y="719" width="45.4" height="18" fill="#3f80bd"/><rect x="544.8" y="719" width="45.4" height="18" fill="#5090c8"/><rect x="590.2" y="719" width="45.4" height="18" fill="#609fd4"/><rect x="635.6" y="719" width="45.4" height="18" fill="#79b0e0"/><rect x="681" y="719" width="45.4" height="18" fill="#98c5ee"/><rect x="726.4" y="719" width="45.4" height="18" fill="#b4d6fb"/><rect x="771.8" y="719" width="45.4" height="18" fill="#d8e8d8"/><rect x="817.2" y="719" width="45.4" height="18" fill="#ffffb4"/><rect x="862.6" y="719" width="45.4" height="18" fill="#f8eea0"/><rect x="908" y="719" width="45.4" height="18" fill="#f3e28c"/><rect x="953.4" y="719" width="46.6" height="18" fill="#eccf6e"/>
</g>
<g font-size="10.5" fill="#222" text-anchor="middle">
<text x="6" y="746">-18</text><text x="52" y="746">-17</text><text x="97" y="746">-16</text><text x="143" y="746">-15</text><text x="188" y="746">-14</text><text x="234" y="746">-13</text><text x="279" y="746">-12</text><text x="324" y="746">-11</text><text x="370" y="746">-10</text><text x="413" y="746">-9</text><text x="459" y="746">-8</text><text x="504" y="746">-7</text><text x="549" y="746">-6</text><text x="595" y="746">-5</text><text x="640" y="746">-4</text><text x="686" y="746">-3</text><text x="731" y="746">-2</text><text x="776" y="746">-1</text><text x="820" y="746">0</text><text x="865" y="746">1</text><text x="911" y="746">2</text><text x="956" y="746">3</text>
</g>
<rect x="0" y="747" width="1000" height="1" fill="#000"/><rect x="0" y="0" width="1" height="748" fill="#000"/>
<g class="s">
<text x="152" y="138">0</text><text x="58" y="167">-1</text><text x="401" y="64">0</text><text x="325" y="142">-1</text><text x="638" y="63">1</text><text x="720" y="245">0</text><text x="690" y="218">-1</text><text x="686" y="278">-2</text><text x="208" y="172">-2</text><text x="421" y="140">-4</text><text x="445" y="82">-3</text><text x="445" y="96">-2</text><text x="532" y="76">-1</text><text x="485" y="128">-5</text><text x="454" y="153">-7</text><text x="437" y="181">-5</text><text x="485" y="160">-6</text><text x="571" y="160">-4</text><text x="610" y="189">-3</text><text x="605" y="214">-6</text><text x="623" y="212">-5</text><text x="564" y="130">-2</text><text x="498" y="225">-6</text><text x="527" y="302">-7</text><text x="70" y="174">-5</text><text x="90" y="179">-4</text><text x="197" y="188">-5</text><text x="12" y="231">-3</text><text x="65" y="225">-6</text><text x="81" y="229">-5</text><text x="42" y="257">-5</text><text x="106" y="264">-10</text><text x="322" y="246">-6</text><text x="302" y="265">-5</text><text x="283" y="282">-7</text><text x="325" y="298">-5</text><text x="330" y="365">-10</text><text x="295" y="395">-5</text><text x="272" y="409">-9</text><text x="260" y="403">-5</text><text x="228" y="404">-11</text><text x="280" y="427">-10</text><text x="214" y="409">-5</text><text x="12" y="380">-9</text><text x="25" y="300">-10</text><text x="42" y="322">-11</text><text x="32" y="354">-12</text><text x="23" y="368">-11</text><text x="138" y="412">-13</text><text x="165" y="440">-12</text><text x="187" y="362">-10</text><text x="43" y="449">-5</text><text x="72" y="486">-7</text><text x="53" y="516">-5</text><text x="126" y="525">-9</text><text x="116" y="527">-5</text><text x="74" y="554">-9</text><text x="153" y="556">-10</text><text x="25" y="589">-9</text><text x="63" y="625">-10</text><text x="104" y="626">-12</text><text x="157" y="625">-11</text><text x="64" y="676">-13</text><text x="145" y="712">-10</text><text x="275" y="710">-11</text><text x="208" y="472">-11</text><text x="206" y="517">-12</text><text x="240" y="562">-11</text><text x="273" y="476">-10</text><text x="252" y="515">-10</text><text x="296" y="578">-11</text><text x="373" y="596">-11</text><text x="316" y="640">-12</text><text x="408" y="621">-11</text><text x="387" y="495">-10</text><text x="394" y="433">-10</text><text x="370" y="339">-9</text><text x="491" y="390">-5</text><text x="468" y="446">-8</text><text x="502" y="684">-10</text><text x="504" y="672">-11</text><text x="515" y="717">-12</text><text x="560" y="665">-10</text><text x="605" y="618">-9</text><text x="564" y="544">-9</text><text x="583" y="482">-5</text><text x="617" y="580">-5</text><text x="606" y="281">-6</text><text x="594" y="245">-5</text><text x="637" y="320">-4</text><text x="660" y="376">-7</text><text x="671" y="327">-5</text><text x="694" y="328">-3</text><text x="733" y="328">-6</text><text x="731" y="340">-7</text><text x="738" y="369">-5</text><text x="704" y="367">-5</text><text x="767" y="358">-3</text><text x="805" y="366">-2</text><text x="770" y="427">-4</text><text x="660" y="441">-7</text><text x="704" y="441">-6</text><text x="760" y="438">-5</text><text x="805" y="423">-5</text><text x="888" y="350">0</text><text x="903" y="345">1</text><text x="865" y="361">-3</text><text x="858" y="408">-4</text><text x="845" y="409">-6</text><text x="908" y="435">-1</text><text x="845" y="441">-7</text><text x="885" y="490">-4</text><text x="887" y="478">-5</text><text x="799" y="483">-5</text><text x="895" y="505">-3</text><text x="777" y="535">-7</text><text x="863" y="503">-6</text><text x="892" y="526">-4</text><text x="898" y="541">-5</text><text x="903" y="558">-3</text><text x="890" y="564">-2</text><text x="925" y="597">0</text><text x="830" y="576">-4</text><text x="813" y="603">-7</text><text x="878" y="612">-6</text><text x="860" y="631">-4</text><text x="880" y="623">-3</text><text x="845" y="630">-5</text><text x="840" y="646">-7</text><text x="785" y="645">-7</text><text x="821" y="671">-6</text><text x="840" y="664">-4</text><text x="714" y="692">-8</text><text x="736" y="671">-5</text><text x="748" y="691">-7</text><text x="689" y="712">-10</text><text x="688" y="699">-10</text><text x="939" y="668">1</text><text x="729" y="615">-7</text><text x="716" y="597">-8</text><text x="690" y="630">-8</text><text x="613" y="587">-9</text>
</g>
<g class="b">
<text x="115" y="195">-7.8</text><text x="122" y="230">-10.4</text><text x="211" y="201">-10.1</text><text x="199" y="225">-10.0</text><text x="189" y="260">-5.9</text><text x="215" y="261">-11.8</text><text x="101" y="278">-12.6</text><text x="53" y="292">-12.8</text><text x="140" y="285">-12.6</text><text x="167" y="285">-10.1</text><text x="162" y="322">-10.4</text><text x="221" y="293">-9.1</text><text x="259" y="320">-11.0</text><text x="286" y="323">-8.2</text><text x="60" y="381">-13.8</text><text x="102" y="389">-14.8</text><text x="113" y="417">-14.4</text><text x="179" y="402">-15.2</text><text x="35" y="420">-12.9</text><text x="173" y="507">-13.5</text><text x="352" y="279">-10.7</text><text x="387" y="315">-10.9</text><text x="452" y="165">-8.2</text><text x="518" y="255">-8.5</text><text x="555" y="277">-10.1</text><text x="653" y="254">-8.9</text><text x="658" y="129">-2.3</text><text x="653" y="156">-3.9</text><text x="848" y="307">1.8</text><text x="717" y="368">-10.6</text><text x="597" y="343">-8.8</text><text x="582" y="403">-9.7</text><text x="513" y="409">-10.1</text><text x="429" y="394">-11.9</text><text x="661" y="428">-9.4</text><text x="584" y="440">-9.1</text><text x="836" y="399">-9.5</text><text x="878" y="390">-5.2</text><text x="400" y="439">-13.7</text><text x="370" y="451">-13.7</text><text x="466" y="476">-11.9</text><text x="463" y="505">-12.8</text><text x="485" y="532">-15.3</text><text x="566" y="522">-10.3</text><text x="621" y="535">-9.6</text><text x="821" y="524">-9.2</text><text x="866" y="540">-8.4</text><text x="780" y="562">-10.8</text><text x="532" y="580">-10.8</text><text x="771" y="591">-10.4</text><text x="787" y="608">-10.3</text><text x="518" y="622">-11.8</text><text x="347" y="644">-15.5</text><text x="355" y="686">-14.6</text><text x="617" y="664">-16.7</text><text x="767" y="679">-10.2</text><text x="725" y="696">-12.1</text><text x="446" y="718">-11.6</text>
</g>
<rect x="2.5" y="2.5" width="235" height="57" fill="#6a6a50" opacity=".55"/>
<rect x="0.5" y="0.5" width="235" height="57" fill="#fff" stroke="#000" stroke-width="1"/>
<text x="2" y="14" font-size="12.9" font-weight="bold" fill="#000">Veðurstofan/T2m 500grid:</text>
<text x="164" y="14" font-size="10.9" fill="#000">Hitakort (2m)</text>
<text x="2" y="27" font-size="11" fill="#000">EC-HRES spá brúuð á 500m net</text>
<text x="2" y="40" font-size="11" fill="#000">IT: Mið. 23. 02. 2022 00Z</text>
<text x="2" y="53" font-size="11" font-weight="bold" fill="#000">VT: Mið. 23.02.2022 10Z</text>
<text x="127" y="53" font-size="11" fill="#000">(+10 h)</text>
</svg>
</body></html>
